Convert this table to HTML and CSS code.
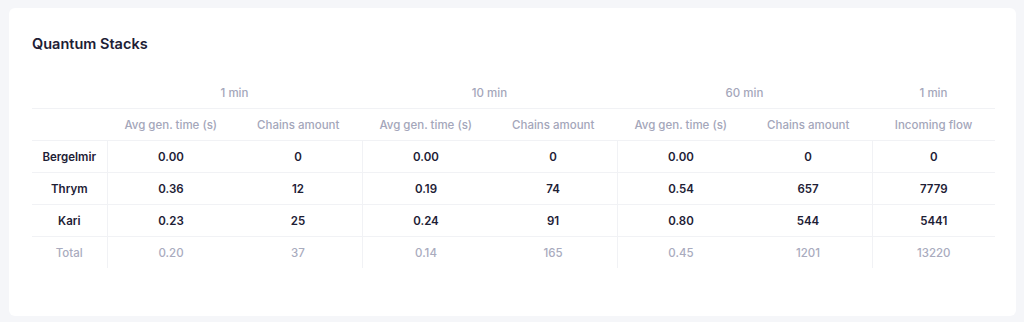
FILE: index.html
```html
<!DOCTYPE html>
<html>
<head>
<meta charset="utf-8">
<link rel="stylesheet" href="styles.css">
</head>
<body>
<div class="card">
  <h2 class="title">Quantum Stacks</h2>
  <table class="stats">
    <colgroup>
      <col class="c-name">
      <col class="c-val"><col class="c-val">
      <col class="c-val"><col class="c-val">
      <col class="c-val"><col class="c-val">
      <col class="c-last">
    </colgroup>
    <thead>
      <tr class="group-row">
        <th></th>
        <th colspan="2">1 min</th>
        <th colspan="2">10 min</th>
        <th colspan="2">60 min</th>
        <th>1 min</th>
      </tr>
      <tr class="sub-row">
        <th></th>
        <th>Avg gen. time (s)</th>
        <th>Chains amount</th>
        <th>Avg gen. time (s)</th>
        <th>Chains amount</th>
        <th>Avg gen. time (s)</th>
        <th>Chains amount</th>
        <th>Incoming flow</th>
      </tr>
    </thead>
    <tbody>
      <tr>
        <td class="name">Bergelmir</td>
        <td class="sep">0.00</td><td>0</td>
        <td class="sep">0.00</td><td>0</td>
        <td class="sep">0.00</td><td>0</td>
        <td class="sep">0</td>
      </tr>
      <tr>
        <td class="name">Thrym</td>
        <td class="sep">0.36</td><td>12</td>
        <td class="sep">0.19</td><td>74</td>
        <td class="sep">0.54</td><td>657</td>
        <td class="sep">7779</td>
      </tr>
      <tr>
        <td class="name">Kari</td>
        <td class="sep">0.23</td><td>25</td>
        <td class="sep">0.24</td><td>91</td>
        <td class="sep">0.80</td><td>544</td>
        <td class="sep">5441</td>
      </tr>
      <tr class="total">
        <td class="name">Total</td>
        <td class="sep">0.20</td><td>37</td>
        <td class="sep">0.14</td><td>165</td>
        <td class="sep">0.45</td><td>1201</td>
        <td class="sep">13220</td>
      </tr>
    </tbody>
  </table>
</div>
</body>
</html>
```

FILE: styles.css
```css
html, body {
  margin: 0;
  padding: 0;
  background: #f5f6f9;
}
body {
  padding: 8px 8px 6px 9px;
  font-family: "Inter", "Noto Sans", sans-serif;
}
.card {
  background: #ffffff;
  border-radius: 6px;
  height: 308px;
  box-sizing: border-box;
  padding: 25px 21px 0 23px;
}
.title {
  margin: 0;
  font-size: 14.5px;
  line-height: 22px;
  font-weight: 600;
  color: #1d2035;
}
.stats {
  margin-top: 22px;
  width: 100%;
  border-collapse: collapse;
  table-layout: fixed;
  font-size: 11.5px;
}
.c-name { width: 75px; }
.c-last { width: 123px; }
.stats th, .stats td {
  height: 31px;
  padding: 0;
  text-align: center;
  vertical-align: middle;
  border-bottom: 1px solid #f1f2f5;
}
.stats th {
  font-weight: 500;
  color: #a4a6ba;
}
.stats td {
  font-weight: 600;
  color: #1d2035;
}
.stats tbody tr:last-child td {
  border-bottom: none;
}
.stats td.sep {
  border-left: 1px solid #f1f2f5;
}
.stats tr.total td {
  font-weight: 500;
  color: #a9abbe;
}
```
